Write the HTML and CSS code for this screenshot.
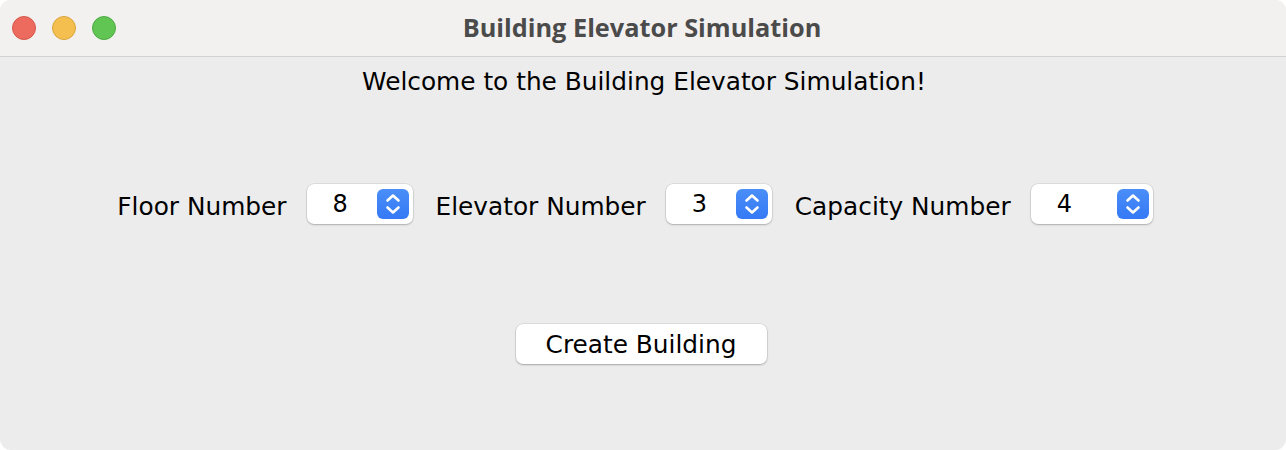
FILE: index.html
```html
<!DOCTYPE html>
<html>
<head>
<meta charset="utf-8">
<link rel="stylesheet" href="styles.css">
</head>
<body>
<div class="window">
  <div class="titlebar">
    <div class="lights">
      <span class="light red"></span>
      <span class="light yellow"></span>
      <span class="light green"></span>
    </div>
    <div class="title">Building Elevator Simulation</div>
  </div>
  <div class="content">
    <div class="welcome">Welcome to the Building Elevator Simulation!</div>
    <div class="controls">
      <span class="label">Floor Number</span>
      <div class="spinner">
        <span class="value">8</span>
        <span class="stepper"><svg width="32" height="30" viewBox="0 0 32 30"><path d="M10.5 11.5 L16 6.5 L21.5 11.5 M10.5 18.5 L16 23.5 L21.5 18.5" fill="none" stroke="#fff" stroke-width="2.6" stroke-linecap="round" stroke-linejoin="round"/></svg></span>
      </div>
      <span class="label">Elevator Number</span>
      <div class="spinner">
        <span class="value">3</span>
        <span class="stepper"><svg width="32" height="30" viewBox="0 0 32 30"><path d="M10.5 11.5 L16 6.5 L21.5 11.5 M10.5 18.5 L16 23.5 L21.5 18.5" fill="none" stroke="#fff" stroke-width="2.6" stroke-linecap="round" stroke-linejoin="round"/></svg></span>
      </div>
      <span class="label">Capacity Number</span>
      <div class="spinner wide">
        <span class="value">4</span>
        <span class="stepper"><svg width="32" height="30" viewBox="0 0 32 30"><path d="M10.5 11.5 L16 6.5 L21.5 11.5 M10.5 18.5 L16 23.5 L21.5 18.5" fill="none" stroke="#fff" stroke-width="2.6" stroke-linecap="round" stroke-linejoin="round"/></svg></span>
      </div>
    </div>
    <div class="actions">
      <button class="btn">Create Building</button>
    </div>
  </div>
</div>
</body>
</html>
```
FILE: styles.css
```css
html, body {
  margin: 0;
  padding: 0;
  background: #ffffff;
}
body {
  width: 1286px;
  height: 450px;
  overflow: hidden;
}
.window {
  width: 1286px;
  height: 450px;
  border-radius: 11px;
  overflow: hidden;
  display: flex;
  flex-direction: column;
  background: #ececec;
}
.titlebar {
  height: 56px;
  flex: none;
  position: relative;
  background: #f2f1f0;
  border-bottom: 1px solid #d2d2d2;
  display: flex;
  align-items: center;
  justify-content: center;
}
.lights {
  position: absolute;
  left: 12px;
  top: 16px;
  display: flex;
  gap: 16px;
}
.light {
  width: 24px;
  height: 24px;
  border-radius: 50%;
  box-sizing: border-box;
}
.red { background: #ed6a5e; border: 1px solid #d4574c; }
.yellow { background: #f5bf4f; border: 1px solid #d9a53d; }
.green { background: #61c554; border: 1px solid #4fab43; }
.title {
  font-family: "Open Sans", "DejaVu Sans", sans-serif;
  font-weight: 700;
  font-size: 25.3px;
  color: #4b4b4b;
  margin-left: -2px;
  margin-top: -2px;
}
.content {
  flex: 1;
  display: flex;
  flex-direction: column;
  align-items: center;
  font-family: "DejaVu Sans", sans-serif;
  color: #000;
}
.welcome {
  font-size: 24.8px;
  margin-top: 10px;
  height: 30px;
  line-height: 30px;
  margin-left: 2px;
}
.controls {
  margin-top: 87px;
  height: 40px;
  display: flex;
  align-items: center;
  padding-right: 16px;
}
.label {
  font-size: 24.8px;
  margin-right: 20px;
  margin-top: 5px;
}
.spinner {
  width: 106px;
  height: 40px;
  box-sizing: border-box;
  background: #fff;
  border-radius: 7px;
  box-shadow: 0 0 0 0.5px rgba(0,0,0,0.12), 0 1px 2px rgba(0,0,0,0.22);
  display: flex;
  align-items: center;
  margin-right: 23px;
  padding-right: 4px;
}
.spinner.wide {
  width: 122px;
  margin-right: 0;
}
.value {
  flex: 1;
  font-size: 24px;
  text-align: left;
  padding-left: 26px;
}
.stepper {
  width: 32px;
  height: 30px;
  border-radius: 6px;
  background: linear-gradient(#4a8ef8, #3579f6);
  display: flex;
}
.actions {
  margin-top: 100px;
  padding-right: 4px;
}
.btn {
  width: 251px;
  height: 40px;
  border: none;
  border-radius: 7px;
  background: #fff;
  box-shadow: 0 0 0 0.5px rgba(0,0,0,0.12), 0 1px 2px rgba(0,0,0,0.25);
  font-family: "DejaVu Sans", sans-serif;
  font-size: 24.8px;
  color: #000;
  padding: 0;
}
```
